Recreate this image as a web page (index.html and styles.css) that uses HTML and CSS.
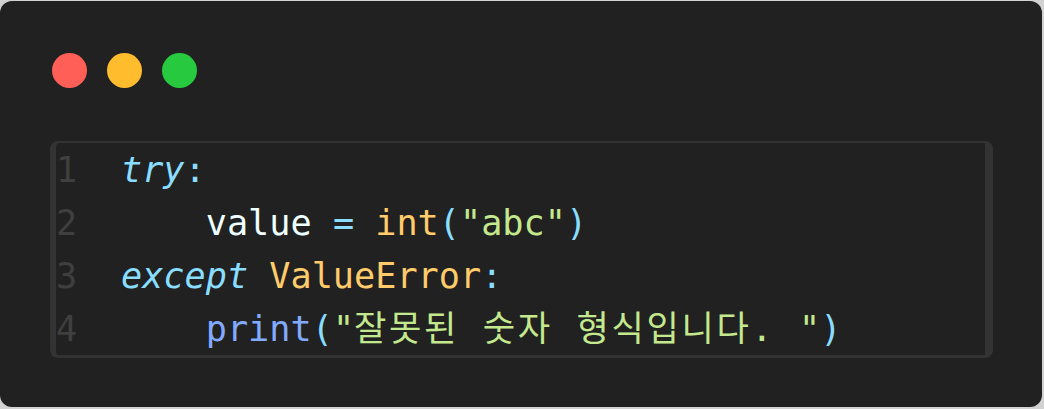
FILE: index.html
```html
<!DOCTYPE html>
<html lang="ko">
<head>
<meta charset="utf-8">
<title>Code</title>
<link rel="stylesheet" href="styles.css">
</head>
<body>
<div class="card">
  <div class="dots">
    <span class="dot red"></span>
    <span class="dot yellow"></span>
    <span class="dot green"></span>
  </div>
  <div class="code">
    <div class="gutter">
      <div class="ln">1</div>
      <div class="ln">2</div>
      <div class="ln">3</div>
      <div class="ln">4</div>
    </div>
    <div class="lines">
      <div class="line"><span class="kw">try</span><span class="op">:</span></div>
      <div class="line">    <span class="var">value</span> <span class="op">=</span> <span class="fn">int</span><span class="op">(</span><span class="str">"abc"</span><span class="op">)</span></div>
      <div class="line"><span class="kw">except</span> <span class="cls">ValueError</span><span class="op">:</span></div>
      <div class="line">    <span class="call">print</span><span class="op">(</span><span class="str">"<span class="ko">잘못된 숫자 형식입니다. </span>"</span><span class="op">)</span></div>
    </div>
  </div>
</div>
</body>
</html>
```

FILE: styles.css
```css
html, body {
  margin: 0;
  padding: 0;
  background: #d2d2d2;
}
body {
  width: 1044px;
  height: 409px;
  overflow: hidden;
}
.card {
  box-sizing: border-box;
  width: 1042px;
  height: 406px;
  margin-top: 1px;
  background: #212121;
  border-radius: 12px;
  padding: 52px 49px 0 50px;
}
.dots {
  display: flex;
  gap: 20px;
  margin-left: 2px;
  height: 35px;
}
.dot {
  width: 35px;
  height: 35px;
  border-radius: 50%;
}
.red { background: #ff5f56; }
.yellow { background: #ffbd2e; }
.green { background: #27c93f; }
.code {
  margin-top: 53px;
  display: flex;
  border: 2px solid #333333;
  border-left-width: 6px;
  border-right-width: 8px;
  border-bottom-width: 3px;
  border-radius: 8px;
  background: #212121;
  font-family: "DejaVu Sans Mono", "Noto Sans CJK KR", monospace;
  font-size: 35.2px;
}
.gutter {
  width: 65px;
  color: #3f3f3f;
}
.ln, .line {
  height: 53px;
  line-height: 53px;
  white-space: pre;
}
.ko { letter-spacing: 2.6px; }
.kw { color: #89ddff; font-style: italic; }
.op { color: #89ddff; }
.var { color: #eeffff; }
.fn { color: #ffcb6b; }
.cls { color: #ffcb6b; }
.str { color: #c3e88d; }
.call { color: #82aaff; }
```
